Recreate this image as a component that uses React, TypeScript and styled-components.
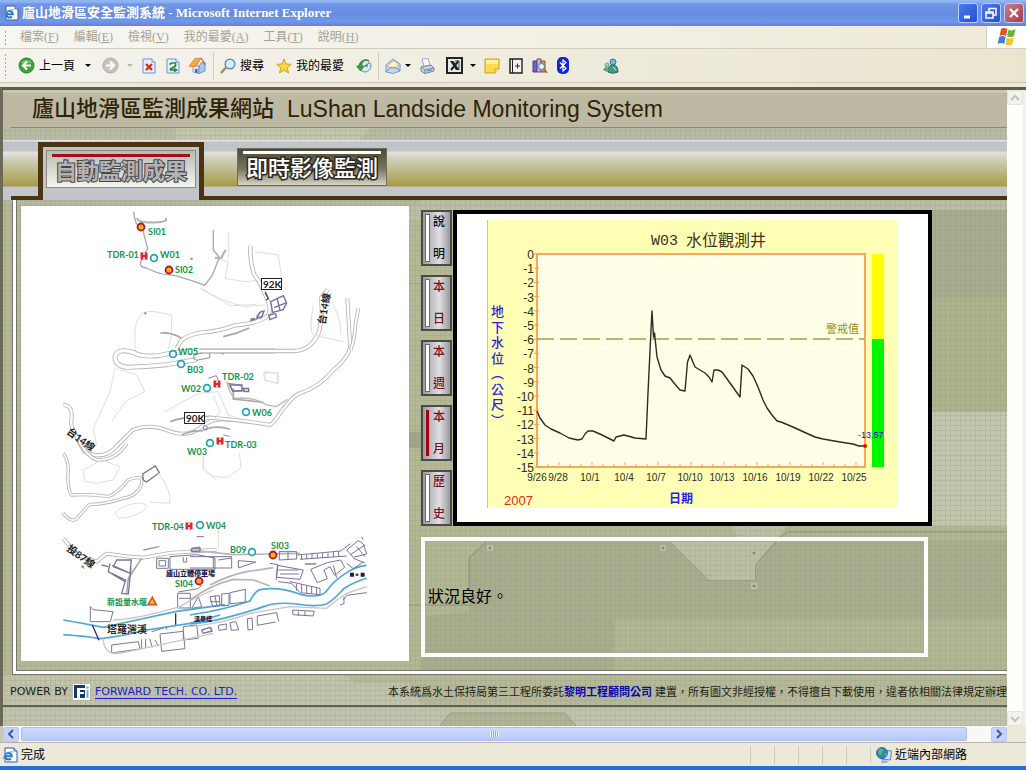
import React from "react";
import styled, { createGlobalStyle } from "styled-components";

const SANS = `"Liberation Sans", "Noto Sans CJK TC", sans-serif`;
const SERIF = `"Liberation Serif", "Noto Sans CJK TC", serif`;

const Global = createGlobalStyle`
  * { box-sizing: border-box; }
  body { margin: 0; background: #ece9d8; font-family: ${SANS}; }
  button { margin: 0; padding: 0; border: 0; background: none; font: inherit; color: inherit; }
  svg { display: block; flex: none; }
`;

/* ---------- browser window ---------- */

const Window = styled.div`
  display: flex;
  flex-direction: column;
  min-height: 100vh;
  border-bottom: 4px solid #1f6fdc;
`;

const TitleBar = styled.header`
  display: flex;
  align-items: center;
  height: 26px;
  padding: 0 2px 0 3px;
  gap: 3px;
  background: linear-gradient(#8fb4f2 0 2px, #7197e6 4px, #668ae0 14px, #6b9be6 21px, #7078e0 26px);
`;

const Title = styled.h1`
  flex: 1;
  margin: 0;
  font: bold 13px/20px ${SERIF};
  color: #fff;
  white-space: nowrap;
  overflow: hidden;
`;

const WindowButton = styled.button<{ $close?: boolean }>`
  display: grid;
  place-items: center;
  width: 20px;
  height: 20px;
  border: 1px solid #b9cdf5;
  border-radius: 3px;
  background: ${(p) => (p.$close ? "linear-gradient(135deg, #c98088, #a83a4c)" : "linear-gradient(135deg, #4a7be8, #2450d8)")};
`;

const MenuBar = styled.nav`
  display: flex;
  align-items: stretch;
  height: 23px;
  border-bottom: 1px solid #d0cdbf;
  background: linear-gradient(90deg, #f6f6f2, #efead9);
`;

const Grip = styled.span`
  width: 3px;
  margin: 4px 13px 3px 4px;
  background: radial-gradient(circle, #aaa79a 1px, transparent 1px) 0 0 / 3px 4px;
`;

const MenuList = styled.div`
  display: flex;
  flex: 1;
  gap: 15px;
`;

const MenuButton = styled.button`
  font: 12px/20px ${SERIF};
  color: #a5a294;
  white-space: nowrap;
`;

const LogoCell = styled.div`
  display: grid;
  place-items: center;
  width: 40px;
  border-left: 1px solid #d8d5c8;
  background: #fff;
`;

const ToolBar = styled.div`
  display: flex;
  align-items: center;
  height: 34px;
  gap: 8px;
  border-bottom: 1px solid #cbc7b4;
  background: linear-gradient(90deg, #f4f3ee, #ebe5cf);
`;

const ToolGrip = styled(Grip)`
  align-self: stretch;
  margin-right: 3px;
`;

const ToolButton = styled.button<{ $after?: number }>`
  display: flex;
  align-items: center;
  gap: 4px;
  margin-right: ${(p) => p.$after || 0}px;
  font-size: 12px;
  line-height: 16px;
  white-space: nowrap;
  color: #000;
`;

const Separator = styled.span`
  width: 1px;
  height: 28px;
  margin: 0 -2px;
  background: #cfccbc;
`;

const Caret = styled.span<{ $dim?: boolean; $gap?: number }>`
  margin-left: ${(p) => p.$gap || 0}px;
  border: 3px solid transparent;
  border-top-color: ${(p) => (p.$dim ? "#b8b6aa" : "#000")};
  border-bottom: 0;
`;

const Viewport = styled.main`
  display: flex;
  flex: 1;
  margin-top: 4px;
  border-top: 3px solid #5f5c4b;
  border-left: 3px solid #6b6957;
`;

const Page = styled.div`
  position: relative;
  isolation: isolate;
  display: flex;
  flex: 1;
  flex-direction: column;
  min-width: 0;
  overflow: hidden;
  background: #bcc0a5;
`;

const Backdrop = styled.svg`
  position: absolute;
  inset: 0;
  z-index: -1;
  width: 100%;
  height: 100%;
`;

const VScroll = styled.div`
  display: flex;
  flex-direction: column;
  justify-content: space-between;
  width: 19px;
  padding-right: 1px;
  background: linear-gradient(90deg, #fefefb 15px, #f3f2ea 16px);
`;

const ScrollButton = styled.button<{ $active?: boolean }>`
  display: grid;
  place-items: center;
  width: 16px;
  height: 15px;
  border: 1px solid ${(p) => (p.$active ? "#b4c8f6" : "#e4e3da")};
  border-radius: 2px;
  background: ${(p) => (p.$active ? "#c3d3fd" : "#f3f2ec")};
  color: ${(p) => (p.$active ? "#3f5a8c" : "#c4c2b8")};
`;

const HScroll = styled.div`
  display: flex;
  align-items: center;
  height: 16px;
  padding-right: 19px;
  border-left: 3px solid #c9c7b8;
  background: linear-gradient(90deg, #f8f8f4 calc(100% - 19px), #ece9d8 0);
`;

const Track = styled.div`
  display: flex;
  flex: 1;
  padding: 0 24px 0 2px;
`;

const Thumb = styled.div`
  display: grid;
  flex: 1;
  place-items: center;
  height: 14px;
  border: 1px solid #aabdf0;
  border-radius: 2px;
  background: linear-gradient(#cbd9ff, #b7cafa);
`;

const ThumbGrip = styled.span`
  width: 9px;
  height: 6px;
  background: repeating-linear-gradient(90deg, #eef3ff 0 1px, #8fa9e6 1px 2px);
`;

const StatusBar = styled.footer`
  display: flex;
  align-items: center;
  height: 24px;
  padding-left: 2px;
  gap: 3px;
  border-top: 1px solid #b9b6a6;
  background: #ece8da;
  font-size: 12px;
  line-height: 16px;
`;

const StatusText = styled.span`
  flex: 1;
`;

const StatusCell = styled.span`
  width: 21px;
  height: 18px;
  border-left: 1px solid #cdcaba;
`;

const ZoneCell = styled.span`
  display: flex;
  align-items: center;
  gap: 3px;
  width: 156px;
  padding-left: 5px;
  border-left: 1px solid #cdcaba;
`;

/* ---------- site ---------- */

const SiteHeader = styled.header`
  display: flex;
  align-items: center;
  gap: 13px;
  height: 50px;
  padding: 0 0 12px 29px;
  color: #2f2406;
  white-space: nowrap;
`;

const SiteName = styled.h2`
  margin: 0;
  font-size: 22px;
  line-height: 30px;
  font-weight: 500;
`;

const SiteNameEn = styled.p`
  margin: 0;
  font-size: 23px;
  line-height: 30px;
`;

const SiteNav = styled.nav`
  display: flex;
  height: 60px;
  padding-left: 8px;
  background: linear-gradient(
    #dfe3e2 0 1px, #c0c4ca 2px 11px, #e2e4dc 12px, #c9c9ae 22px, #a69c46 46px, #c3c6cc 47px
  );
`;

const NavLead = styled.span`
  width: 27px;
  border-bottom: 4px solid #4a3412;
`;

const ActiveTab = styled.div`
  margin-top: 2px;
  padding: 3px 3px 0;
  border: 5px solid #4a3412;
  border-bottom: 0;
  background: #c1c5c9;
`;

const NavRest = styled.div`
  flex: 1;
  padding: 8px 0 0 33px;
  border-bottom: 4px solid #4a3412;
`;

const NavButton = styled.button<{ $active?: boolean }>`
  display: flex;
  flex-direction: column;
  align-items: center;
  width: 150px;
  height: 38px;
  padding-top: ${(p) => (p.$active ? 3 : 2)}px;
  border: 1px solid ${(p) => (p.$active ? "#8b8b80" : "#6f6c59")};
  background: ${(p) => (p.$active ? "linear-gradient(#b9bdb0, #f4f5f0)" : "linear-gradient(#4c4a38, #77745f 55%, #d5d3c4)")};
  font-size: 22px;
  line-height: 30px;
  font-weight: ${(p) => (p.$active ? 700 : 500)};
  color: ${(p) => (p.$active ? "#b4b2b2" : "#fff")};
  -webkit-text-stroke: ${(p) => (p.$active ? "2px #4a4648" : "3px #2b2920")};
  paint-order: stroke fill;
  &::before {
    content: "";
    flex: none;
    width: 138px;
    height: 3px;
    background: ${(p) => (p.$active ? "#a30d1c" : "#fff")};
  }
`;

const Frame = styled.section`
  display: flex;
  flex-wrap: nowrap;
  gap: 12px;
  margin-left: 10px;
  padding: 6px 0 10px 5px;
  border: solid #fff;
  border-width: 0 0 3px 3px;
  box-shadow: inset 1px -1px #77786a, -1px 1px #77786a;
`;

const MapPanel = styled.div`
  flex: none;
  width: 388px;
  background: #fff;
`;

const Results = styled.div`
  display: flex;
  flex-direction: column;
  gap: 11px;
  padding-top: 4px;
`;

const ChartRow = styled.div`
  display: flex;
  gap: 1px;
`;

const Periods = styled.div`
  display: flex;
  flex-direction: column;
  justify-content: space-between;
`;

const PeriodButton = styled.button<{ $tone: string }>`
  display: flex;
  align-items: stretch;
  gap: 3px;
  width: 31px;
  height: 56px;
  padding: 2px 4px 2px 2px;
  border: 2px solid #4b4a45;
  background: linear-gradient(90deg, #9b9b9f, #e0e0e4 60%, #9a9a9e);
  color: ${(p) => p.$tone};
  font-size: 12px;
  line-height: 14px;
  font-weight: 500;
`;

const PeriodBar = styled.span<{ $on?: boolean }>`
  flex: none;
  width: 5px;
  border: 1px solid ${(p) => (p.$on ? "#c9a5a8" : "#6b6b6b")};
  background: ${(p) => (p.$on ? "#a30010" : "#fff")};
`;

const PeriodText = styled.span`
  display: flex;
  flex-direction: column;
  justify-content: space-between;
  padding: 1px 0;
`;

const ChartPanel = styled.div`
  padding: 6px 31px 14px 30px;
  border: 4px solid #000;
  background: #fff;
`;

const Notice = styled.div`
  display: flex;
  align-items: center;
  width: 507px;
  height: 120px;
  padding: 0 3px;
  border: 4px solid #fff;
  box-shadow: inset 0 0 0 1px #a9ab9a;
  font-size: 16px;
  line-height: 20px;
  color: #000;
`;

const SiteFooter = styled.footer`
  display: flex;
  align-items: center;
  gap: 5px;
  height: 33px;
  padding: 4px 0 0 7px;
  border-bottom: 2px solid #5f6250;
  white-space: nowrap;
  font-size: 11px;
  line-height: 14px;
  color: #1e1e14;
`;

const Powered = styled.span`
  font-family: "DejaVu Sans", sans-serif;
`;

const VendorLink = styled.a`
  font-family: "DejaVu Sans", sans-serif;
  color: #1a1ad0;
  text-decoration: underline;
  text-underline-offset: 3px;
`;

const Legal = styled.p`
  margin: 0 0 0 auto;
`;

const LegalLink = styled.a`
  font-weight: 700;
  color: #0a0aa8;
  text-decoration: none;
`;

const Tail = styled.div`
  flex: 1;
  min-height: 18px;
`;

/* ---------- icons ---------- */

const PageE = () => (
  <svg width="16" height="16" viewBox="0 0 16 16">
    <path d="M3 1h9l3 3v11H3z" fill="#fff" stroke="#3a5ca8" />
    <path d="M12 1v3h3" fill="#cfe0fa" stroke="#3a5ca8" />
    <path d="M3.200 9.200h6.600a3.300 3.300 0 1 0-.9 2.300" fill="none" stroke="#2479cf" strokeWidth="2" />
    <path d="M1 12C2 7 7 4 11 5" fill="none" stroke="#58a6ea" />
  </svg>
);

const Flag = () => (
  <svg width="20" height="18" viewBox="0 0 20 18">
    <path d="M4 1q3-2 6.500 0L9 8Q6 6 2.500 8z" fill="#e8542a" />
    <path d="M11.500 1.500q3 2 7-.5l-1.500 7q-3 2-7 .2z" fill="#6cb33e" />
    <path d="M2.200 9q3-2 6.500 0l-1.500 7q-3-2-6.500 0z" fill="#3f7fdc" />
    <path d="M9.800 9.500q3 2 7 0l-1.600 7q-3 2-6.900 0z" fill="#f5c32c" />
  </svg>
);

const BackIcon = () => (
  <svg width="17" height="17" viewBox="0 0 17 17">
    <circle cx="8.500" cy="8.500" r="7.500" fill="#3aa535" stroke="#2a8226" />
    <path d="M3 6a6 5 0 0 1 11 0z" fill="#8ed886" opacity=".6" />
    <path d="M9 4.500 5 8.500l4 4M5.500 8.500H13" fill="none" stroke="#fff" strokeWidth="2.200" />
  </svg>
);

const ForwardIcon = () => (
  <svg width="17" height="17" viewBox="0 0 17 17">
    <circle cx="8.500" cy="8.500" r="7.500" fill="#c4c3be" stroke="#a9a8a2" />
    <path d="M8 4.500l4 4-4 4M11.500 8.500H4" fill="none" stroke="#fff" strokeWidth="2.200" />
  </svg>
);

const Sheet = ({ children }: { children: React.ReactNode }) => (
  <svg width="16" height="16" viewBox="0 0 16 16">
    <path d="M2 1h9l3 3v11H2z" fill="#e6effc" stroke="#6b93d4" />
    <path d="M11 1v3h3" fill="#fff" stroke="#6b93d4" />
    {children}
  </svg>
);

const HomeIcon = () => (
  <svg width="17" height="17" viewBox="0 0 17 17">
    <path d="M4 8v7l6 1.500V9z" fill="#dfeaf8" stroke="#7f9cc8" />
    <path d="M10 9l3-4 3 3v6l-6 2.500z" fill="#a9c6ee" stroke="#6f93c8" />
    <path d="M0 9 6 1.500l6-.5-5 8.500H1z" fill="#f9a848" stroke="#d07a28" strokeWidth=".7" />
    <path d="M12 1l4.500 6.500" stroke="#b0642c" strokeWidth="1.300" />
    <path d="M6 12h2.500v4L6 15.400z" fill="#3c64a8" />
  </svg>
);

const SearchIcon = () => (
  <svg width="16" height="16" viewBox="0 0 16 16">
    <path d="M1 15l5-5.500" stroke="#b08a50" strokeWidth="2.500" />
    <circle cx="10" cy="6" r="4.800" fill="#d8ecfb" stroke="#5c8fce" strokeWidth="1.500" />
    <path d="M7.500 5a3 3 0 0 1 3-2" stroke="#fff" fill="none" strokeWidth="1.200" />
  </svg>
);

const StarIcon = () => (
  <svg width="16" height="16" viewBox="0 0 16 16">
    <path d="M8 1l2 5 5.300.4-4.100 3.400 1.400 5.200L8 12.200 3.400 15l1.400-5.200L.7 6.400 6 6z" fill="#fbd84a" stroke="#c99a1c" strokeWidth=".9" />
  </svg>
);

const HistoryIcon = () => (
  <svg width="16" height="16" viewBox="0 0 16 16">
    <circle cx="9" cy="8" r="6" fill="#d6e8f4" stroke="#6d93a8" />
    <path d="M9 8l4-3M9 8h3" stroke="#456" />
    <path d="M13 2.500A7 7 0 0 0 3 8H.5L4.500 13l4-5H6a5 5 0 0 1 7-5.500z" fill="#38a03c" stroke="#1f7426" strokeWidth=".6" />
  </svg>
);

const MailIcon = () => (
  <svg width="16" height="16" viewBox="0 0 16 16">
    <path d="M1 7l7-6 7 5v7L8 15.500 1 14z" fill="#bcd8f6" stroke="#6f9cd0" />
    <path d="M4 6l5-3 4 3-1 4-5 1-4-2z" fill="#fdf3cf" stroke="#d6b265" strokeWidth=".8" />
    <path d="M1 14l5-5 2 1 2-1 5 4" fill="none" stroke="#5f8fca" />
  </svg>
);

const PrintIcon = () => (
  <svg width="16" height="16" viewBox="0 0 16 16">
    <path d="M3 1l6-.5 2 7-6 1z" fill="#fff" stroke="#8fa6c4" />
    <path d="M2 9l10-2 3 3v3l-9 2.500L2 13z" fill="#c8d4e4" stroke="#7286a4" />
    <path d="M2 9l4 3 9-2M6 12v3.500" fill="none" stroke="#7286a4" />
    <path d="M8 13l5-1" stroke="#5f83bd" />
  </svg>
);

const SheetXIcon = () => (
  <svg width="17" height="17" viewBox="0 0 17 17">
    <path d="M1 1h15v15H1z" fill="#e9e9e6" stroke="#222" strokeWidth="2" />
    <path d="M4 4h3.500l6 9H10z" fill="#222" />
    <path d="M12.500 4 5 13" stroke="#222" strokeWidth="2" />
    <path d="M9 4h4v9" fill="none" stroke="#444" />
  </svg>
);

const NoteIcon = () => (
  <svg width="16" height="16" viewBox="0 0 16 16">
    <path d="M1 1h14v10l-4 4H1z" fill="#fbdc48" stroke="#c9a224" />
    <path d="M2 2h12v4H2z" fill="#fff1a0" />
    <path d="M11 15v-4h4" fill="#fff3b5" stroke="#c9a224" />
  </svg>
);

const BookIcon = () => (
  <svg width="16" height="16" viewBox="0 0 16 16">
    <path d="M2 1h12v14H2z" fill="#f2f2ee" stroke="#222" strokeWidth="1.500" />
    <path d="M4.500 1v14" stroke="#222" />
    <path d="M9.500 5.500v5M7 8h5" stroke="#333" />
    <path d="M14 3v11" stroke="#666" strokeWidth="1.500" />
  </svg>
);

const ResearchIcon = () => (
  <svg width="16" height="16" viewBox="0 0 16 16">
    <path d="M1 3h4v11H1z" fill="#7464b4" stroke="#4a3c88" />
    <path d="M5 1h4v13H5z" fill="#c2b7e4" stroke="#5c4f98" />
    <path d="M9 3h4v11H9z" fill="#d89a4c" stroke="#8a5c22" />
    <circle cx="9.500" cy="8.500" r="3" fill="#e6f3fc" stroke="#4f7fb4" />
    <path d="M12 11l3 4" stroke="#a87728" strokeWidth="2" />
  </svg>
);

const BluetoothIcon = () => (
  <svg width="14" height="17" viewBox="0 0 14 17">
    <rect x="1" y="0" width="12" height="17" rx="5" fill="#1226d4" />
    <path d="M4 5.500l6 6L7 14V3l3 2.500-6 6" fill="none" stroke="#fff" strokeWidth="1.200" />
  </svg>
);

const MessengerIcon = () => (
  <svg width="17" height="16" viewBox="0 0 17 16">
    <circle cx="11" cy="4" r="3" fill="#7cb9d0" stroke="#2f7896" />
    <path d="M6 14q0-7 5-7t5 7q-5 2.500-10 0z" fill="#3f9a86" stroke="#256b66" />
    <circle cx="5" cy="7" r="2" fill="#a9d6b4" stroke="#4c9a6c" strokeWidth=".8" />
    <path d="M1 12q1-3 4-3l2 3-2 2z" fill="#5caa70" />
    <path d="M11 9l3 3" stroke="#cdebf2" />
  </svg>
);

const NetworkIcon = () => (
  <svg width="16" height="16" viewBox="0 0 16 16">
    <path d="M6 3l9.500 1-1 9L5 12z" fill="#d4e2f4" stroke="#5a7fb0" />
    <path d="M6 13l6 1-1 2H5z" fill="#9fb4d0" />
    <circle cx="6" cy="6" r="5.500" fill="#2d7fd8" stroke="#1c5aa8" strokeWidth=".8" />
    <path d="M3 2q5-1 4 2T4 8.500Q1 6 3 2zM8 7l3-1-1 4z" fill="#5ec04a" />
  </svg>
);

const VendorLogo = () => (
  <svg width="17" height="16" viewBox="0 0 17 16">
    <path d="M0 0h17v16H0z" fill="#fff" />
    <path d="M1 1h11v13H1z" fill="#0d3c6e" />
    <path d="M4 4h8v2H7v2h4v2H7v4H4z" fill="#fff" />
    <path d="M13.500 6h2v8h-2z" fill="#7fa6c0" />
    <circle cx="14.500" cy="3.500" r="1.200" fill="#7fa6c0" />
  </svg>
);

const Chevron = ({ d }: { d: string }) => (
  <svg width="10" height="10" viewBox="0 0 10 10">
    <path d={d} fill="none" stroke="currentColor" strokeWidth="2" />
  </svg>
);

/* ---------- page backdrop ---------- */

const Bolt = ({ x, y }: { x: number; y: number }) => (
  <g>
    <rect x={x - 3} y={y - 3} width="6" height="6" fill="#c3c7ad" />
    <circle cx={x} cy={y} r="1.500" fill="#84886e" />
  </g>
);

const PageBackdrop = () => (
  <Backdrop aria-hidden="true">
    <defs>
      <pattern id="mesh" width="5" height="5" patternUnits="userSpaceOnUse">
        <path d="M0 .5h5M.5 0v5" stroke="#8d9276" strokeOpacity=".2" />
      </pattern>
    </defs>
    <g transform="translate(-3 -90)">
      <path d="M0 200h4000v475H0z" fill="#b4b894" />
      <path d="M409 200h600v20H409z" fill="#b9bea4" />
      <path d="M0 200h420v6H0z" fill="#b3b89f" />
      <path d="M932 210h3000v88H932z" fill="#a8ac8e" />
      <path d="M932 298h3000v114H932z" fill="#aeb28d" />
      <path d="M932 412h3000v120H932z" fill="#c2c6ad" />
      <path d="M409 284h12v-1h-12zM409 432h12v16h-12z" fill="#a2a688" />
      <path d="M409 526h3500v148H409z" fill="#b1b693" />
      <path d="M469 612v-54l18-17h182l40 39h46v-15l22-24h3000v78H614v52H421v-54z" fill="#a8ad8e" />
      <path d="M469 590v-32l18-17h182l40 39h46v-15l22-24" fill="none" stroke="#8b9076" />
      <path d="M732 526l14 14h31l10-8h3000" fill="none" stroke="#8b9076" />
      <path d="M732 526h55l-32 39v15h-46l-40-39h70z" fill="#bbc0a4" />
      <path d="M409 605h65" stroke="#8f947b" />
      <Bolt x={490} y={548} />
      <Bolt x={663} y={548} />
      <Bolt x={754} y={553} />
      <Bolt x={754} y={586} />
      <path d="M0 675h4000v33H0z" fill="#b5b999" />
      <path d="M0 675h345l10 8h55l12 24H0z" fill="#c0c3aa" />
      <path d="M0 708h4000v400H0z" fill="#c1c4ad" />
      <path d="M440 726l10-13h115l11 13z" fill="#b0b594" />
      <path d="M440 726l10-13h115l11 13" fill="none" stroke="#999d84" />
      <path d="M0 127h4000v14H0z" fill="#b9bca5" />
      <path d="M175 141v-13h194l-10 13z" fill="#c3c6ad" />
      <path d="M0 90h4000v1400H0z" fill="url(#mesh)" />
      <path d="M0 90h4000v37H0z" fill="#bdb9a2" />
      <path d="M0 91.500h4000" stroke="#cfcbb6" strokeWidth="2" />
      <path d="M11 127.500h4000" stroke="#8b8872" />
    </g>
  </Backdrop>
);

/* ---------- site map ---------- */

const Road = ({ d, w = 12 }: { d: string; w?: number }) => (
  <g fill="none" strokeLinejoin="round">
    <path d={d} stroke="#b4b2b4" strokeWidth={w} />
    <path d={d} stroke="#fff" strokeWidth={w - 5} />
  </g>
);

type Mark = [kind: "si" | "tdr" | "w", x: number, y: number, label: string, lx: number, ly: number];

const MARKS: Mark[] = [
  ["si", 141, 227, "SI01", 148, 235],
  ["tdr", 144, 256, "TDR-01", 107, 258],
  ["w", 154, 258, "W01", 160, 258],
  ["si", 169, 270, "SI02", 175, 273],
  ["w", 173, 354, "W05", 178, 355],
  ["w", 181, 364, "B03", 187, 373],
  ["w", 207, 388, "W02", 181, 392],
  ["tdr", 217, 384, "TDR-02", 222, 380],
  ["w", 246, 412, "W06", 252, 416],
  ["w", 210, 443, "W03", 187, 455],
  ["tdr", 220, 441, "TDR-03", 225, 448],
  ["tdr", 189, 526, "TDR-04", 152, 530],
  ["w", 200, 525, "W04", 206, 529],
  ["w", 252, 552, "B09", 230, 553],
  ["si", 273, 555, "SI03", 271, 549],
  ["si", 199, 581, "SI04", 175, 587],
];

const Station = ({ mark: [kind, x, y, label, lx, ly] }: { mark: Mark }) => (
  <g>
    {kind === "si" && <circle cx={x} cy={y} r="3.500" fill="#ffb400" stroke="#b01040" strokeWidth="1.800" />}
    {kind === "w" && <circle cx={x} cy={y} r="3.400" fill="#fff" stroke="#1fa3b8" strokeWidth="1.700" />}
    {kind === "tdr" && (
      <g>
        <rect x={x - 3.500} y={y - 3.500} width="7" height="7" fill="#e0252c" />
        <path d={`M${x} ${y - 3.500}v2.500M${x} ${y + 1}v2.500`} stroke="#fff" strokeWidth="1.500" />
      </g>
    )}
    <text x={lx} y={ly} fill="#159350" fontSize="9">{label}</text>
  </g>
);

const SiteMap = () => (
  <svg width="388" height="455" viewBox="21 206 388 455" role="img" aria-label="廬山地滑區監測儀器配置圖">
    <g transform="translate(15 205) scale(.3333)">
      <g fill="none" stroke="#dedede" strokeWidth="3">
        <path d="M360 450V370q10-60 60-50l50 10v60l-10 40M300 490l-15 70-50 110 10 50M305 490l60 20 25 50-60 30-40 60" />
        <path d="M560 250q60 40 130 55l60-5M600 160l40 10-10 50 60 10 110-10-10-70-70-10" />
        <path d="M450 620l100-55 60-5 30 70 60 20-130-20M750 500l40 5v30l-40-8z" />
        <path d="M640 80v80" />
      </g>
      <path d="M356 20q4 40 18 45t12 20l12 45-18 35q-12 22 14 24 40 20 65 20t110 32l22-28 22-55-18-24V75" fill="none" stroke="#a9a7a9" strokeWidth="4" />
      <path d="M365 40q8 14 40 12 30 2 48-5v-8M600 158h20l8-18M625 145l8-10" fill="none" stroke="#b4b2b4" strokeWidth="6" />
      <path d="M436 384q35-2 64 16M466 650q40-15 90-15l75 5M625 395q40-8 78-26M655 550v32l90 10" fill="none" stroke="#aaa6a2" strokeWidth="5" />
      <Road d="M485 430l15-25q25-18 60-22 60-5 100-22 60-5 90-22 20-10 12-42-22-60-45-90-14-40-10-85" w={13} />
      <Road d="M780 438H560q-70 0-130 14-50 5-75-10-50-15-55 15 0 25 35 30 60-2 120-8l90-15" w={15} />
      <Road d="M145 600q28 0 25 40-5 22 8 40 12 30 30 60 60 30 100-20l45-45q50-20 100 0 60 25 100-5 40-35 95-25" w={12} />
      <path d="M500 690q30-15 60-12 40-20 85-5" fill="none" stroke="#aaa" strokeWidth="5" />
      <g fill="none" stroke="#8b87b0" strokeWidth="3">
        <path d="M535 460l3-12 45-8 2 18-40 8zM585 440h22l20 8M580 520l24-8 6 14M640 535l35 5 12 16-35 2zM690 550q10 2 5 10-12 0-5-10" />
        <path d="M568 660l10 6-4 10-10-6zM625 690l18 4M725 335q10-22 22-15l-8 20z" />
      </g>
      <path d="M705 350l18-6-4-6-12 2zM388 322h6v6h-6zM527 158h6v6h-6z" fill="#88848c" />
    </g>
    <g transform="translate(200 205) scale(.3333)">
      <Road d="M0 438h280q55 0 78-60l8-55-2-45 20-25" w={13} />
      <Road d="M-30 648l60-10q100 8 180 22 15-10 30-35 40-55 60-60 60-20 100-70 55-45 50-80l-8-135" w={12} />
      <Road d="M452 435q14-40 14-75l9-50" w={11} />
      <path d="M80 530q10 40 25 50 60-5 95 20l30 5 32-22" fill="none" stroke="#b8b6b6" strokeWidth="4" />
      <path d="M340 300q-14 80 0 90l90 20M395 290q25 40 28 100M190 505l42-2v32l-38-10zM0 250l90 52 80-4M40 650l20-30-20-50" fill="none" stroke="#dedede" strokeWidth="3" />
      <g fill="none" stroke="#756fa0" strokeWidth="4">
        <path d="M212 290l38-18 10 22-10 20-32 8zM222 308l36-14M232 282l8 34M206 330l20-4 4 10-20 8zM170 340l10-18 12-4-6 16zM90 540h36v18H98zM130 550h16v10h-14z" />
        <path d="M195 262l10 18-6 6" stroke="#444" />
      </g>
    </g>
    <g transform="translate(15 440) scale(.3333)">
      <Road d="M190 0q30 55 60 60 55 0 85-50" w={11} />
      <Road d="M145 40q18 25 14 60-2 45 10 65 60-4 110 5 30-10 60-50 50-20 40 15-15 35-55 40-60 20-100 18-20 20-40 45-20 10-40-20" w={10} />
      <path d="M385 120l10 6 38-28-12-20-38 24z" fill="#fff" stroke="#77748c" strokeWidth="4" />
      <path d="M300 220q10-20 60-30 45-5 30 20-40 25-80 25zM205 90l55-30 55 20-20 40-50 10-35-5zM430 100q40 50 35 90l-60-4M565 50v40l40 30" fill="none" stroke="#dedede" strokeWidth="3" />
      <Road d="M145 295l40 50 60 20 30-24 60 8 50 4 80-14 140-10" w={12} />
      <path d="M385 330l48-10M200 380q5-6 6 4zM380 355l-40 60-5 45" fill="none" stroke="#9a989c" strokeWidth="4" />
      <g fill="none" stroke="#7a7698" strokeWidth="3">
        <path d="M305 360h44l-4 40-50-20zM292 376l46 20M290 400l42 20-12 40 20 2 8-80M285 370l-5 25 50 30M260 375l20 5" strokeWidth="4" />
        <path d="M425 355h35v30h-35zM432 362h20v16h-20zM465 350l80-6 55 10v34H465zM505 352v14h10v-14M530 325l25-4v14h-25z" />
        <path d="M226 500v45h60l8-30-60-6zM488 460h38v44h-38zM492 475h34M530 505l20-35 10 30zM545 290h22M490 456l60-10 10-10" />
        <path d="M290 615l80-10 5 22-85 12zM380 598v28M392 596v28M404 596l8 26M420 600l10 18M435 582l70-8 5 52-70 8zM505 560l40-5 5 40-45 5zM410 575l45-14v8M560 570l25-8 5 10-25 8z" />
      </g>
      <path d="M145 540q60 10 120 22l100-22 120-26 145-20M145 584q70 5 110 12 60-6 140-26l130-20 90-25" fill="none" stroke="#49a8dc" strokeWidth="5" />
      <path d="M232 555l20 46M482 520v34" stroke="#2c2a80" strokeWidth="4" />
      <path d="M295 540q70-2 200-40 40-25 100-50M265 595q0 50 50 45l280-60" fill="none" stroke="#c9c4c6" strokeWidth="4" />
      <path d="M412 472l12 22h-25z" fill="#ffb848" stroke="#d8541c" strokeWidth="5" />
    </g>
    <g transform="translate(190 440) scale(.3333)">
      <path d="M40 50l-2 30 30 28 40 6 45-30-5-45M85 260v70" fill="none" stroke="#dedede" strokeWidth="3" />
      <path d="M0 330l130 14 200-4M60 435q60-30 110-40l80-12M0 480q60-45 130-62l60 2 50 18" fill="none" stroke="#b8b4b6" strokeWidth="5" />
      <path d="M0 525q100-15 180-42 15-30 30-34 60-10 120 14 60 14 80-10 20-30 60-55 30-20 60-22M0 552q60-5 120-22 60-15 100-30 40-15 100-8 60 10 90 0 25-15 50-45 30-20 70-32" fill="none" stroke="#49a8dc" strokeWidth="5" />
      <path d="M0 560q100-10 180-40l120-20 110 5q30-25 60-45l60-20" fill="none" stroke="#c9c4c6" strokeWidth="4" />
      <g fill="none" stroke="#78739a" strokeWidth="3">
        <path d="M0 350h125v34H0M70 350v34M85 360l40-6M145 362l52 4-52 18zM268 335h52v22l-52 3zM294 335v22M5 325h25v10H5z" />
        <path d="M322 345l130-12 30-22M330 358l140-10M335 345v14M350 343v14M366 342v14M382 341v14M398 340v14M414 338v14M430 336v16M446 334v16" />
        <path d="M470 330l35-28 15 10 10 30-40 10zM480 345l45-30M490 355l35 14M500 320l25 30M515 290l4 8" />
        <path d="M362 388l20 40 30-12-10-26 18-10 14 26 30-24-12-22-40 8zM430 376l10 38M470 370l20 16 30-20" />
        <path d="M240 370l24 4-6 46M262 376l78 14-10 28-70-6zM265 390h60M270 402h56M265 425l40 5 25 28 60 6M300 425l90 20v18M320 432v20M335 434v22M350 438v22M365 440v22M380 444v20" />
        <path d="M60 470l8 30 22-3-2-30zM75 466l5 30M95 462v36l22-2v-36zM120 458l46-10v38l-46 6zM60 485h30" />
        <path d="M35 570l28-8 4 12-28 6zM85 556l24-4v16l-22 3zM120 548l18-3 8 24-22 2zM172 536l14-2 2 34-14 2zM202 528l58-10 6 26M202 528v28l55-10M308 510l65 4-4 14-60-4zM325 514v14M345 514v14M460 480l10-14 60-8M450 495l12-4v-20" />
      </g>
      <path d="M345 370h34v4h-34z" fill="#777" />
      <g fill="#221a52">
        <path d="M480 398h12v12h-12zM497 401h8v6h-8zM512 398h12v12h-12z" />
      </g>
    </g>
    <g fontFamily={`Lato, "Noto Sans CJK TC", sans-serif`} fontSize="10" fontWeight="700">
      {MARKS.map((m) => (
        <Station key={m[3]} mark={m} />
      ))}
      <text x="107" y="605" fontSize="8" fill="#159350">新設量水堰</text>
      <text x="166" y="576" fontSize="7" fontWeight="900" fill="#221a52">廬山立體停車場</text>
      <text x="194" y="621" fontSize="6" fontWeight="900" fill="#221a52">溫泉橋</text>
      <text x="107" y="633" fill="#222">塔羅灣溪</text>
      <g fill="#fff" stroke="#222">
        <rect x="261.500" y="278.500" width="20" height="11" />
        <rect x="184.500" y="412.500" width="20" height="11" />
      </g>
      <g fill="#222">
        <text x="263" y="288">92K</text>
        <text x="186" y="422">90K</text>
        <text transform="translate(66 433) rotate(36)">台14線</text>
        <text transform="translate(325 325) rotate(-80)">台14線</text>
        <text transform="translate(66 550) rotate(36)">投87線</text>
      </g>
    </g>
  </svg>
);

/* ---------- water level chart ---------- */

const LEVELS = Array.from({ length: 16 }, (_, i) => i);
const DATES: [string, number][] = [
  ["9/26", 537], ["9/28", 558], ["10/1", 590], ["10/4", 624], ["10/7", 656], ["10/10", 690],
  ["10/13", 722], ["10/16", 755], ["10/19", 788], ["10/22", 821], ["10/25", 854],
];
const levelY = (n: number) => 254 + n * 14.2;

const WATER_LEVEL = [
  [537, 411], [540, 418], [545, 425], [551, 429], [560, 433], [569, 438], [578, 440], [582, 439],
  [585, 434], [588, 431], [593, 431], [602, 435], [608, 438], [614, 441], [616, 437], [624, 435],
  [635, 438], [646, 439], [648, 393], [651, 330], [652, 311], [653.5, 337], [654.5, 333], [657, 357],
  [661, 370], [665, 376], [670, 378], [674, 383], [680, 390], [685, 391], [687.5, 362], [690, 355],
  [695, 367], [700, 370], [705, 373], [709, 377], [712, 382], [714, 370], [718, 370], [722, 372],
  [730, 383], [740, 397], [742, 365], [748, 369], [753, 376], [758, 387], [763, 400], [767, 408],
  [772, 415], [777, 421], [781, 422], [793, 427], [806, 433], [815, 437], [823, 439], [840, 442],
  [853, 444], [859, 446], [865, 446],
];

const Chart = () => (
  <svg width="410" height="288" viewBox="487 220 410 288" role="img" aria-label="W03 水位觀測井">
    <rect x="487" y="220" width="410" height="288" fill="#ffffb5" />
    <path d="M487.500 220v288" stroke="#c9c9a0" />
    <rect x="537" y="254" width="328" height="213" fill="#fffee6" stroke="#f5a85c" strokeWidth="2" />
    <g stroke="#f0a050">
      {LEVELS.map((n) => <path key={n} d={`M534 ${levelY(n)}h5`} />)}
      {Array.from({ length: 29 }, (_, i) => <path key={i} d={`M${548 + i * 11} ${i % 3 === 1 ? 462 : 464}v3`} />)}
    </g>
    <path d="M537 339h328" stroke="#a5a04c" strokeWidth="1.500" strokeDasharray="17 6" />
    <rect x="872" y="254" width="12" height="86" fill="#ff0" />
    <rect x="872" y="339" width="12" height="128" fill="#00f500" />
    <polyline points={WATER_LEVEL.join(" ")} fill="none" stroke="#2c2c24" strokeWidth="1.400" strokeLinejoin="round" />
    <circle cx="865" cy="446" r="2" fill="#f00" />
    <g fontFamily={`"Liberation Sans", sans-serif`} fontSize="12" fill="#2c2c24" textAnchor="end">
      {LEVELS.map((n) => <text key={n} x="534" y={levelY(n) + 5}>{n ? -n : 0}</text>)}
    </g>
    <g fontFamily={`"Liberation Sans", sans-serif`} fontSize="10" fill="#2c2c24" textAnchor="middle">
      {DATES.map(([d, x]) => <text key={d} x={x} y="481">{d}</text>)}
    </g>
    <text x="651" y="245" fontFamily={`"Liberation Mono", monospace`} fontSize="15" fill="#3c3620">W03</text>
    <text x="686" y="246" fontFamily={`"Noto Sans CJK TC", sans-serif`} fontSize="16" fill="#3c3620">水位觀測井</text>
    <g fontFamily={`"Noto Sans CJK TC", sans-serif`} fontSize="13" fontWeight="500" fill="#2a24e0">
      {["地", "下", "水", "位", "︵", "公", "尺", "︶"].map((c, i) => (
        <text key={c} x="491" y={316 + i * 15.500}>{c}</text>
      ))}
      <text x="669" y="503" fontSize="12" fontWeight="700">日期</text>
    </g>
    <text x="826" y="333" fontFamily={`"Noto Sans CJK TC", sans-serif`} fontSize="11" fill="#8f8a20">警戒值</text>
    <text x="858" y="438" fontFamily={`"Liberation Sans", sans-serif`} fontSize="9" fill="#1a10c8">-13.57</text>
    <text x="504" y="505" fontFamily={`"Liberation Sans", sans-serif`} fontSize="13" fill="#e8281c">2007</text>
  </svg>
);

/* ---------- app ---------- */

const MENUS = [["檔案", "F"], ["編輯", "E"], ["檢視", "V"], ["我的最愛", "A"], ["工具", "T"], ["說明", "H"]];
const PERIODS: [string, string][] = [["說", "明"], ["本", "日"], ["本", "週"], ["本", "月"], ["歷", "史"]];

export default function App() {
  return (
    <Window>
      <Global />
      <TitleBar>
        <PageE />
        <Title>廬山地滑區安全監測系統 - Microsoft Internet Explorer</Title>
        <WindowButton aria-label="最小化">
          <svg width="12" height="12"><path d="M2 10h6" stroke="#fff" strokeWidth="3" /></svg>
        </WindowButton>
        <WindowButton aria-label="還原">
          <svg width="12" height="12"><path d="M4 4V1.500h7V8H8.500M1 5h7v6H1zM1 6h7" fill="none" stroke="#fff" strokeWidth="1.500" /></svg>
        </WindowButton>
        <WindowButton $close aria-label="關閉">
          <svg width="12" height="12"><path d="M2 2l8 8M10 2l-8 8" stroke="#fff" strokeWidth="2.200" /></svg>
        </WindowButton>
      </TitleBar>

      <MenuBar>
        <Grip />
        <MenuList>
          {MENUS.map(([name, key]) => (
            <MenuButton key={key}>{name}(<u>{key}</u>)</MenuButton>
          ))}
        </MenuList>
        <LogoCell><Flag /></LogoCell>
      </MenuBar>

      <ToolBar>
        <ToolGrip />
        <ToolButton $after={3}><BackIcon />上一頁<Caret $gap={6} /></ToolButton>
        <ToolButton aria-label="下一頁"><ForwardIcon /><Caret $dim $gap={4} /></ToolButton>
        <ToolButton aria-label="停止">
          <Sheet><path d="M5 6l6 6M11 6l-6 6" stroke="#e0241c" strokeWidth="2.200" /></Sheet>
        </ToolButton>
        <ToolButton aria-label="重新整理">
          <Sheet><path d="M4.500 6.500l2-1.500h4v3L5.500 11v1H11M9 10.500l2.500 1.500L9 13.500" fill="none" stroke="#23902c" strokeWidth="1.700" /></Sheet>
        </ToolButton>
        <ToolButton $after={1} aria-label="首頁"><HomeIcon /></ToolButton>
        <Separator />
        <ToolButton $after={4}><SearchIcon />搜尋</ToolButton>
        <ToolButton $after={4}><StarIcon />我的最愛</ToolButton>
        <ToolButton aria-label="記錄"><HistoryIcon /></ToolButton>
        <Separator />
        <ToolButton aria-label="郵件"><MailIcon /><Caret /></ToolButton>
        <ToolButton $after={3} aria-label="列印"><PrintIcon /></ToolButton>
        <ToolButton aria-label="編輯"><SheetXIcon /><Caret $gap={3} /></ToolButton>
        <ToolButton aria-label="便箋"><NoteIcon /></ToolButton>
        <ToolButton aria-label="字典"><BookIcon /></ToolButton>
        <ToolButton aria-label="參考資料"><ResearchIcon /></ToolButton>
        <ToolButton $after={24} aria-label="藍牙"><BluetoothIcon /></ToolButton>
        <ToolButton aria-label="Messenger"><MessengerIcon /></ToolButton>
      </ToolBar>

      <Viewport>
        <Page>
          <PageBackdrop />
          <SiteHeader>
            <SiteName>廬山地滑區監測成果網站</SiteName>
            <SiteNameEn>LuShan Landside Monitoring System</SiteNameEn>
          </SiteHeader>
          <SiteNav>
            <NavLead />
            <ActiveTab><NavButton $active>自動監測成果</NavButton></ActiveTab>
            <NavRest><NavButton>即時影像監測</NavButton></NavRest>
          </SiteNav>
          <Frame>
            <MapPanel><SiteMap /></MapPanel>
            <Results>
              <ChartRow>
                <Periods>
                  {PERIODS.map(([a, b], i) => (
                    <PeriodButton key={a + b} $tone={i ? "#7c1018" : "#111"}>
                      <PeriodBar $on={i === 3} />
                      <PeriodText><span>{a}</span><span>{b}</span></PeriodText>
                    </PeriodButton>
                  ))}
                </Periods>
                <ChartPanel><Chart /></ChartPanel>
              </ChartRow>
              <Notice>狀況良好。</Notice>
            </Results>
          </Frame>
          <SiteFooter>
            <Powered>POWER BY</Powered>
            <VendorLogo />
            <VendorLink href="#">FORWARD TECH. CO. LTD.</VendorLink>
            <Legal>
              本系統爲水土保持局第三工程所委託<LegalLink href="#">黎明工程顧問公司</LegalLink> 建置，所有圖文非經授權，不得擅自下載使用，違者依相關法律規定辦理
            </Legal>
          </SiteFooter>
          <Tail />
        </Page>
        <VScroll>
          <ScrollButton aria-label="向上捲動"><Chevron d="M1 7l4-4 4 4" /></ScrollButton>
          <ScrollButton aria-label="向下捲動"><Chevron d="M1 3l4 4 4-4" /></ScrollButton>
        </VScroll>
      </Viewport>
      <HScroll>
        <ScrollButton $active aria-label="向左捲動"><Chevron d="M7 1 3 5l4 4" /></ScrollButton>
        <Track><Thumb><ThumbGrip /></Thumb></Track>
        <ScrollButton $active aria-label="向右捲動"><Chevron d="M3 1l4 4-4 4" /></ScrollButton>
      </HScroll>
      <StatusBar>
        <PageE />
        <StatusText>完成</StatusText>
        <StatusCell />
        <StatusCell />
        <StatusCell />
        <StatusCell />
        <StatusCell />
        <ZoneCell><NetworkIcon />近端內部網路</ZoneCell>
      </StatusBar>
    </Window>
  );
}
